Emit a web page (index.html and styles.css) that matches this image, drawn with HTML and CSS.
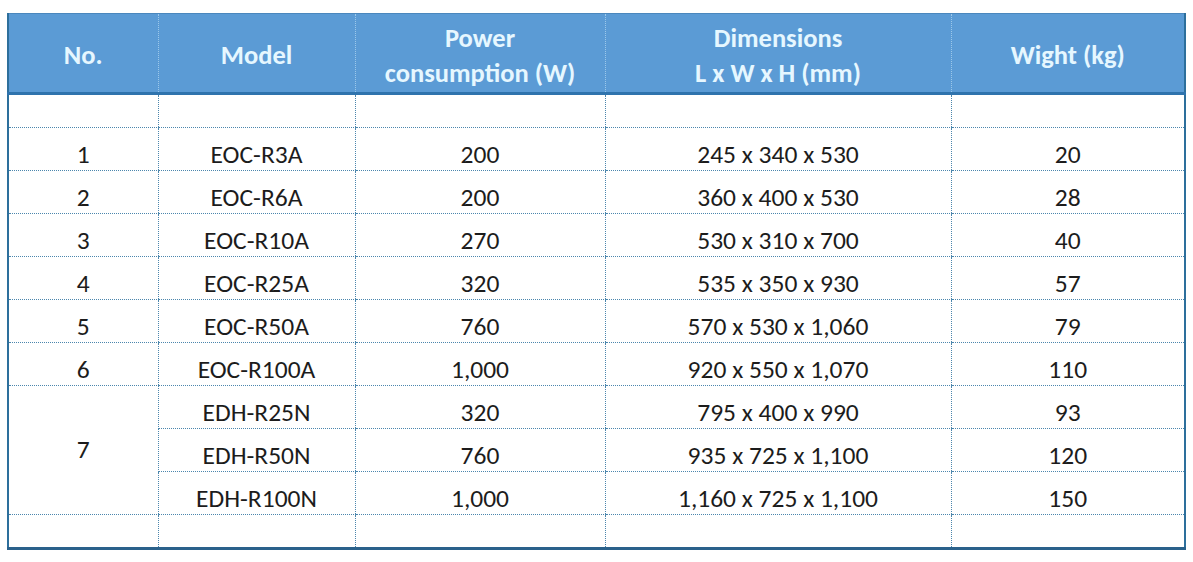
FILE: index.html
```html
<!DOCTYPE html>
<html lang="en">
<head>
<meta charset="utf-8">
<title>Specifications</title>
<link rel="stylesheet" href="styles.css">
</head>
<body>
<div class="page">
  <table class="spec">
    <colgroup>
      <col class="c-no">
      <col class="c-model">
      <col class="c-power">
      <col class="c-dim">
      <col class="c-weight">
    </colgroup>
    <thead>
      <tr>
        <th>No.</th>
        <th>Model</th>
        <th>Power<br>consumption (W)</th>
        <th>Dimensions<br>L x W x H (mm)</th>
        <th>Wight (kg)</th>
      </tr>
    </thead>
    <tbody>
      <tr class="spacer-top"><td class="first"></td><td></td><td></td><td></td><td></td></tr>
      <tr><td class="first">1</td><td>EOC-R3A</td><td>200</td><td>245 x 340 x 530</td><td>20</td></tr>
      <tr><td class="first">2</td><td>EOC-R6A</td><td>200</td><td>360 x 400 x 530</td><td>28</td></tr>
      <tr><td class="first">3</td><td>EOC-R10A</td><td>270</td><td>530 x 310 x 700</td><td>40</td></tr>
      <tr><td class="first">4</td><td>EOC-R25A</td><td>320</td><td>535 x 350 x 930</td><td>57</td></tr>
      <tr><td class="first">5</td><td>EOC-R50A</td><td>760</td><td>570 x 530 x 1,060</td><td>79</td></tr>
      <tr><td class="first">6</td><td>EOC-R100A</td><td>1,000</td><td>920 x 550 x 1,070</td><td>110</td></tr>
      <tr><td class="first span" rowspan="3">7</td><td>EDH-R25N</td><td>320</td><td>795 x 400 x 990</td><td>93</td></tr>
      <tr><td>EDH-R50N</td><td>760</td><td>935 x 725 x 1,100</td><td>120</td></tr>
      <tr><td>EDH-R100N</td><td>1,000</td><td>1,160 x 725 x 1,100</td><td>150</td></tr>
      <tr class="spacer-bottom"><td class="first"></td><td></td><td></td><td></td><td></td></tr>
    </tbody>
  </table>
</div>
</body>
</html>
```
FILE: styles.css
```css
html, body {
  margin: 0;
  padding: 0;
  background: #ffffff;
}

.page {
  padding: 13px 7px 0 7px;
}

.spec {
  width: 1177px;
  table-layout: fixed;
  border-collapse: collapse;
  font-family: Carlito, Calibri, "Liberation Sans", Arial, sans-serif;
  color: #1c1c1c;
  border-left: 2px solid #2d6f9c;
  border-right: 2px solid #2d6f9c;
  border-bottom: 3px solid #2a618b;
}

.c-no { width: 150px; }
.c-model { width: 197px; }
.c-power { width: 250px; }
.c-dim { width: 346px; }
.c-weight { width: 234px; }

.spec th {
  background: #5b9bd5;
  color: #e6f7ff;
  font-weight: bold;
  font-size: 26.5px;
  line-height: 35px;
  height: 80px;
  padding: 5px 0 0 0;
  box-sizing: border-box;
  text-align: center;
  vertical-align: middle;
  border-top: 1px solid #4a87bd;
  border-bottom: 3px solid #2f73ad;
  border-left: 1px dotted #9cc8ea;
}

.spec th:first-child {
  border-left: none;
}

.spec td {
  font-size: 25.5px;
  height: 43px;
  padding: 12px 0 0 0;
  box-sizing: border-box;
  text-align: center;
  vertical-align: middle;
  border-left: 1px dotted #4b86ad;
  border-bottom: 1px dotted #4b86ad;
  line-height: 28px;
}

.spec td.first {
  border-left: none;
}

.spec td.span {
  padding: 0;
}

.spec .spacer-top td {
  height: 34px;
  padding: 0;
}

.spec .spacer-bottom td {
  height: 34px;
  padding: 0;
  border-bottom: none;
}
```
